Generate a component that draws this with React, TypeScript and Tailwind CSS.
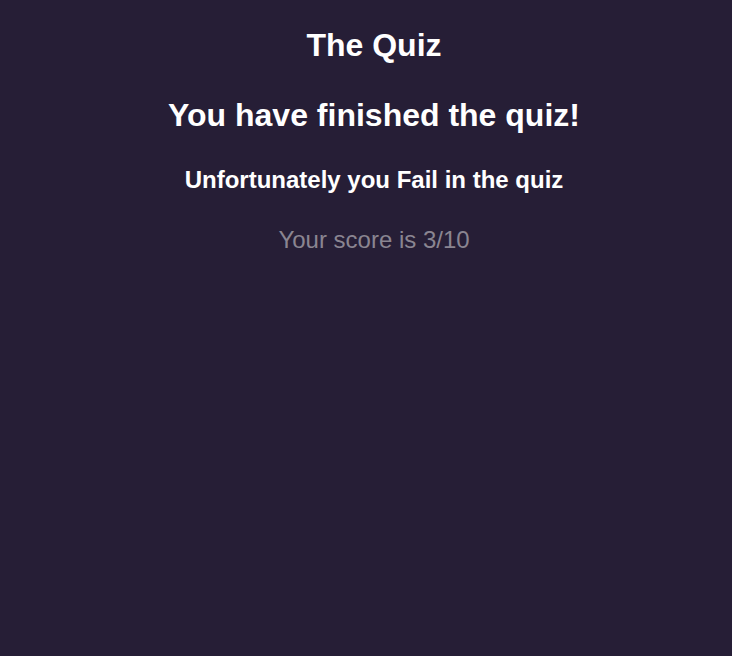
import React from "react";

const App: React.FC = () => {
  const score = 3;
  const total = 10;
  const passed = score >= total / 2;

  return (
    <div className="w-full min-h-screen bg-[#261e36] font-['Liberation_Sans',Arial,sans-serif]">
      <div className="flex flex-col items-center pt-[27px] pl-[16px] text-center">
        <h1 className="text-[32px] leading-[37px] font-bold text-white">The Quiz</h1>
        <h1 className="mt-[33px] text-[32px] leading-[37px] font-bold text-white">You have finished the quiz!</h1>
        <h2 className="mt-[32px] text-[24px] leading-[28px] font-bold text-white">
          {passed ? "Congratulations you Pass the quiz" : "Unfortunately you Fail in the quiz"}
        </h2>
        <p className="mt-[32px] text-[24px] leading-[28px] text-[#8a8591]">
          Your score is {score}/{total}
        </p>
      </div>
    </div>
  );
};

export default App;
